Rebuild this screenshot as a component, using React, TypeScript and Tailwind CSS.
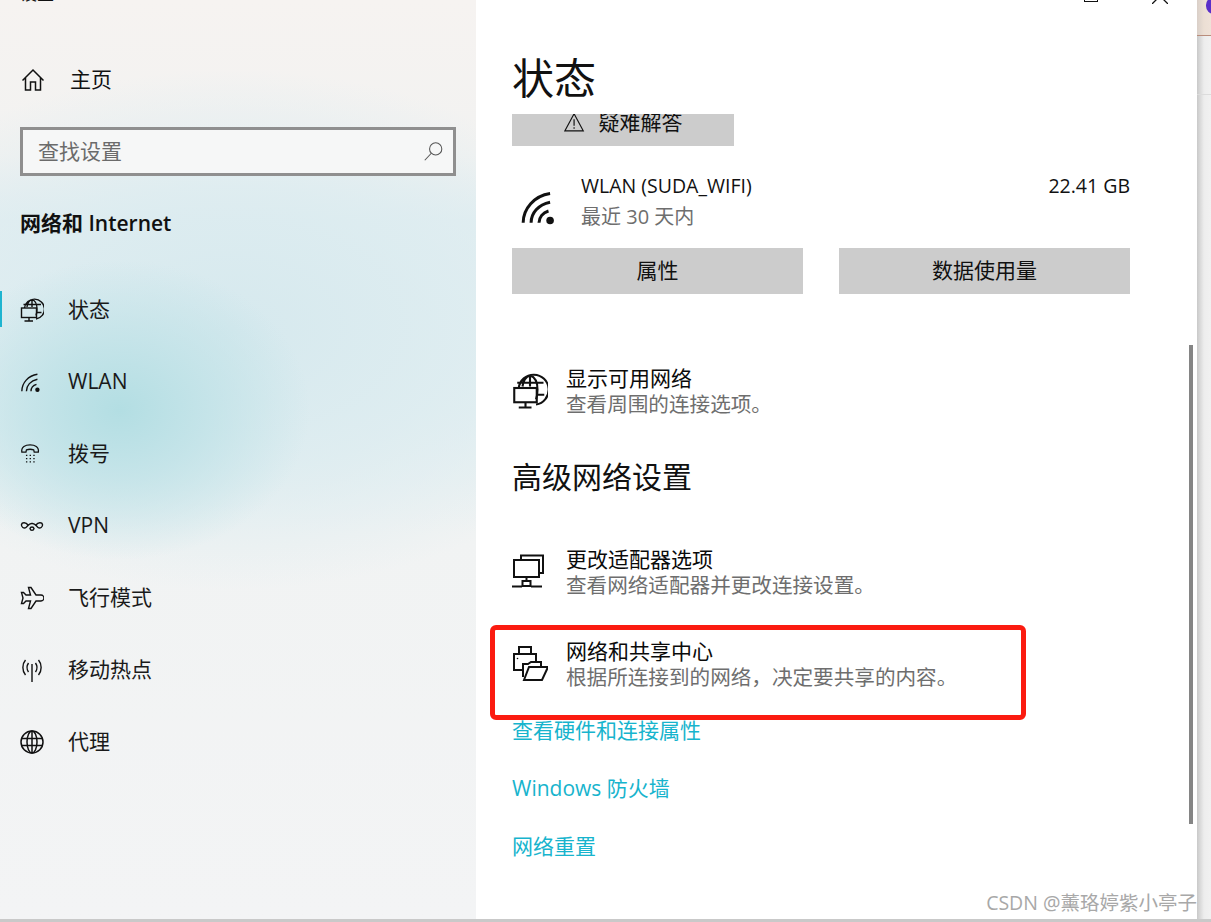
import React from "react";

const FONT = "font-['Open_Sans','Noto_Sans_CJK_SC',sans-serif]";

const Ic = ({ w = 24, h = 24, vb = "0 0 24 24", sw = 1.5, children }: { w?: number; h?: number; vb?: string; sw?: number; children: React.ReactNode }) => (
  <svg width={w} height={h} viewBox={vb} fill="none" stroke="#111" strokeWidth={sw} className="shrink-0">
    {children}
  </svg>
);

const GlobePc = ({ size = 24 }: { size?: number }) => (
  <Ic w={size} h={size} vb="0 0 24 24" sw={1.4}>
    <path d="M4.5 10 A10 10 0 1 1 16 21 M7 9 C7.5 5 9 2.5 12 1.6 C15 2.5 17 6 17 11 C17 14 16.6 16 16 17.6 M12 1.6 V9 M3.5 6.5 H21 M17 14.5 H21.5" />
    <rect x="1.5" y="10" width="15" height="9.5" fill="none" />
    <path d="M9 19.5 V23 M4.5 23 H13" />
  </Ic>
);

const Wifi = ({ size = 24, sw = 1.5 }: { size?: number; sw?: number }) => (
  <Ic w={size} h={size} sw={sw}>
    <path d="M2 22 C2 13 9 5 19 3.5 M7 22 C7 16 11.5 10.5 19 9 M12 22 C12 18.5 14.5 15.5 18 14.5" />
    <circle cx="19" cy="20.5" r="2.4" fill="#111" stroke="none" />
  </Ic>
);

const Phone = () => (
  <Ic w={22} h={22} sw={1.4}>
    <path d="M2 10 C1 4 6 2 11 2 C16 2 21 4 20 10 L15.5 10 L15 7.5 C13 6.8 9 6.8 7 7.5 L6.5 10 Z" />
    <path d="M6.5 13.5h1.5M10.5 13.5h1.5M14.5 13.5h1.5M6.5 17h1.5M10.5 17h1.5M14.5 17h1.5M6.5 20.5h1.5M10.5 20.5h1.5M14.5 20.5h1.5" />
  </Ic>
);

const Vpn = () => (
  <Ic w={24} h={24} sw={1.4}>
    <path d="M8 11 C6 8 2 8 1.5 10.5 C1 13 4 15 6 13.5 C8 12 9 9 12 9.5 C15 9 16 12 18 13.5 C20 15 23 13 22.5 10.5 C22 8 18 8 16 11 M10 14.5 C10.5 17 13.5 17 14 14.5 C13.5 12.5 10.5 12.5 10 14.5 Z" />
  </Ic>
);

const Plane = () => (
  <Ic w={24} h={24} sw={1.4}>
    <path d="M8.5 1.5 H11 L16 9 H21 C23 9 24 11 24 12 C24 13 23 15 21 15 H16 L11 22.5 H8.5 L10.5 15 H6 L3.5 17.5 H1.5 L3 12 L1.5 6.5 H3.5 L6 9 H10.5 Z" />
  </Ic>
);

const Hotspot = () => (
  <Ic w={24} h={24} sw={1.4}>
    <path d="M12 6 V24 M5.5 2 C2 6 2 13 5.5 17 M18.5 2 C22 6 22 13 18.5 17 M8.5 5 C6.5 8 6.5 11 8.5 14 M15.5 5 C17.5 8 17.5 11 15.5 14" />
  </Ic>
);

const Globe = () => (
  <Ic w={24} h={24} sw={1.5}>
    <circle cx="12" cy="12" r="11" />
    <ellipse cx="12" cy="12" rx="5" ry="11" />
    <path d="M1.5 8.5 H22.5 M1.5 15.5 H22.5 M12 1 V23" />
  </Ic>
);

const Home = () => (
  <Ic w={24} h={24} sw={1.5}>
    <path d="M1.5 12.5 L12 2 L22.5 12.5 M4.5 10 V22 H9.5 V14 H14.5 V22 H19.5 V10" />
  </Ic>
);

const Adapter = () => (
  <Ic w={36} h={36} vb="0 0 36 36" sw={2}>
    <path d="M9 6 V1.5 H31 V19 H27" />
    <rect x="2" y="6" width="25" height="17" />
    <path d="M14.5 23 V27 M10.5 27 H18.5 V32 H10.5 Z M0 32.5 H10 M19 32.5 H30" />
  </Ic>
);

const Share = () => (
  <Ic w={36} h={36} vb="0 0 36 36" sw={2}>
    <path d="M7 8 V1 H19 V8" />
    <path d="M10 24 H2 V8 H24 V15" />
    <circle cx="5.5" cy="12.5" r="0.8" fill="#111" stroke="none" />
    <path d="M11 31 V18 H16 L19 16 H29 V21" />
    <path d="M12 34 L17 21 H36 L30 34 Z" />
  </Ic>
);

const Warn = () => (
  <Ic w={22} h={22} sw={1.3}>
    <path d="M11 2 L21 20.5 H1 Z M11 8 V15 M11 16.5 V18.2" />
  </Ic>
);

const items: [React.ReactNode, string][] = [
  [<GlobePc />, "状态"],
  [<Wifi size={22} />, "WLAN"],
  [<Phone />, "拨号"],
  [<Vpn />, "VPN"],
  [<Plane />, "飞行模式"],
  [<Hotspot />, "移动热点"],
  [<Globe />, "代理"],
];

const Row = ({ icon, title, sub, mt }: { icon: React.ReactNode; title: string; sub: string; mt: string }) => (
  <div className={`flex items-center ${mt}`}>
    <div className="w-[54px] flex shrink-0">{icon}</div>
    <div>
      <div className="h-[26px] leading-[26px] text-[21px] text-[#0a0a0a]">{title}</div>
      <div className="h-[26px] leading-[26px] text-[20.6px] text-[#6e6e6e]">{sub}</div>
    </div>
  </div>
);

export default function App() {
  return (
    <div className={`${FONT} w-[1211px] h-[922px] overflow-hidden flex flex-col bg-[#c9c9c9]`}>
      <div className="flex h-[919px] shrink-0">
        {/* sidebar */}
        <aside className="w-[476px] shrink-0 h-full overflow-hidden text-[#111] bg-[radial-gradient(ellipse_190px_150px_at_120px_410px,#b3dee3_0%,#bfe2e7cc_45%,transparent_100%),radial-gradient(ellipse_420px_260px_at_230px_330px,#d6e9ee_0%,#dcecf0cc_55%,transparent_100%),linear-gradient(180deg,#f6f3f1_0%,#f2f2f1_17%,#e3eef1_24%,#e6f0f2_45%,#f1f3f3_58%,#f3f4f5_100%)]">
          <div className="h-[20px] -mt-[16px] ml-[20px] text-[17px] leading-[20px]">设置</div>
          <div className="h-[72px] mt-[40px] flex items-center pl-[21px] gap-[25px]">
            <Home />
            <span className="text-[21px]">主页</span>
          </div>
          <div className="mx-[20px] mt-[11px] h-[49px] border-[3px] border-[#8f8f8f] bg-[#f6f7f7] flex items-center justify-between pl-[15px] pr-[9px]">
            <span className="text-[21px] text-[#6b6b6b]">查找设置</span>
            <Ic w={21} h={21} sw={1.2}>
              <circle cx="14.5" cy="9" r="7" stroke="#555" />
              <path d="M9.5 14 L2 22" stroke="#555" />
            </Ic>
          </div>
          <div className="mt-[33px] ml-[20px] h-[28px] leading-[28px] text-[21px] font-semibold">网络和 Internet</div>
          <nav className="mt-[37px]">
            {items.map(([ic, label], i) => (
              <div key={label} className="relative h-[72px] flex items-center pl-[20px]">
                {i === 0 && <div className="absolute left-0 top-[17px] h-[36px] w-[2px] bg-[#1fb4d0]" />}
                <div className="w-[48px] flex">{ic}</div>
                <span className="text-[21px] text-[#1a1a1a]">{label}</span>
              </div>
            ))}
          </nav>
        </aside>

        {/* main */}
        <main className="relative w-[721px] shrink-0 h-full bg-white overflow-hidden pl-[36px] pr-[67px]">
          <div className="absolute right-[99px] -top-[12px] w-[14px] h-[14px] border-[1.5px] border-[#111]" />
          <svg width="16" height="16" viewBox="0 0 16 16" className="absolute right-[29px] -top-[12px]" stroke="#111" strokeWidth="1.3">
            <path d="M0 0 L16 16 M16 0 L0 16" />
          </svg>

          <h1 className="mt-[46px] h-[64px] leading-[64px] text-[42px] text-[#111]">状态</h1>
          <div className="mt-[4px] w-[222px] h-[32px] overflow-hidden bg-[#cccccc] flex items-end justify-center">
            <div className="h-[46px] shrink-0 flex items-center gap-[13px] text-[21px] text-[#111]">
              <Warn />
              <span>疑难解答</span>
            </div>
          </div>

          <div className="mt-[27px] flex">
            <div className="w-[69px] pl-[8px] pt-[15px] shrink-0">
              <Wifi size={38} sw={1.9} />
            </div>
            <div className="flex-1">
              <div className="flex justify-between">
                <span className="h-[26px] leading-[26px] text-[19.5px] text-[#111]">WLAN (SUDA_WIFI)</span>
                <span className="h-[26px] leading-[26px] text-[19.5px] text-[#111]">22.41 GB</span>
              </div>
              <div className="mt-[5px] h-[26px] leading-[26px] text-[20px] text-[#6e6e6e]">最近 30 天内</div>
            </div>
          </div>

          <div className="mt-[18px] flex gap-[36px] w-[618px]">
            <button className="flex-1 h-[46px] bg-[#cccccc] text-[21px] text-[#111]">属性</button>
            <button className="flex-1 h-[46px] bg-[#cccccc] text-[21px] text-[#111]">数据使用量</button>
          </div>

          <Row icon={<GlobePc size={36} />} title="显示可用网络" sub="查看周围的连接选项。" mt="mt-[71px]" />

          <h2 className="mt-[38px] h-[44px] leading-[44px] text-[30px] text-[#111]">高级网络设置</h2>

          <Row icon={<Adapter />} title="更改适配器选项" sub="查看网络适配器并更改连接设置。" mt="mt-[47px]" />

          <div className="relative mt-[40px]">
            <Row icon={<Share />} title="网络和共享中心" sub="根据所连接到的网络，决定要共享的内容。" mt="mt-0" />
            <div className="absolute -left-[22px] -top-[13px] w-[536px] h-[95px] border-[5px] border-[#fb1b10] rounded-[6px]" />
          </div>

          <div className="mt-[24px] h-[58px] leading-[32px] text-[21px] text-[#17b4cd]">查看硬件和连接属性</div>
          <div className="h-[58px] leading-[32px] text-[21px] text-[#17b4cd]">Windows 防火墙</div>
          <div className="h-[58px] leading-[32px] text-[21px] text-[#17b4cd]">网络重置</div>

          <div className="absolute left-[713px] top-[345px] w-[4px] h-[479px] bg-[#858585]" />
          <div className="absolute right-[0px] top-[892px] h-[22px] leading-[22px] text-[19.5px] text-[#a8a8a8] whitespace-nowrap">CSDN @薰珞婷紫小亭子</div>
        </main>

        {/* strip of the window behind */}
        <div className="relative flex-1 h-full bg-[linear-gradient(90deg,#c9c9c9_0%,#ededed_50%,#f1f1f1_100%)]">
          <div className="h-[36px] border-b border-[#b98d7c] bg-[linear-gradient(90deg,#d9cfc8_0%,#ecdfd4_50%,#efe2d8_100%)]" />
          <div className="absolute left-[9px] -top-[3px] w-[16px] h-[17px] rounded-full bg-[#5a2fc9]" />
          <div className="h-[59px] border-b border-[#dcdcdc]" />
        </div>
      </div>
    </div>
  );
}
